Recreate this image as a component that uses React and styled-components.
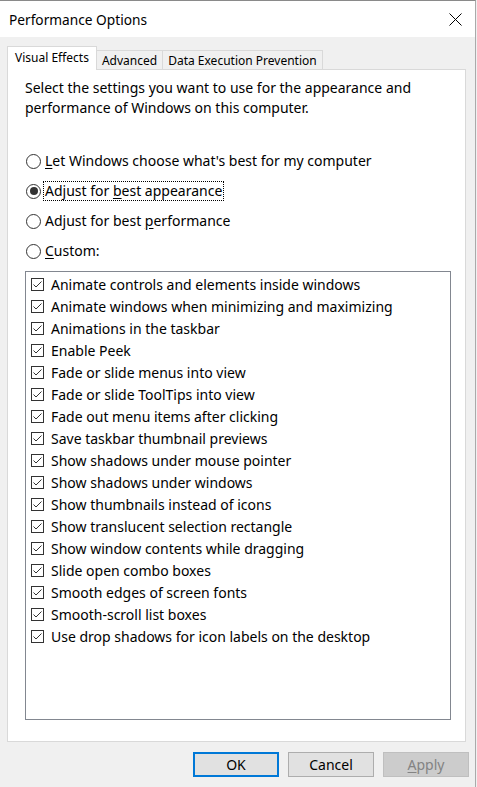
import React from "react";
import styled, { createGlobalStyle } from "styled-components";

const GlobalStyle = createGlobalStyle`
  html, body {
    margin: 0;
    padding: 0;
    background: #f0f0f0;
  }
  body {
    font-family: "Noto Sans", "Open Sans", sans-serif;
    font-size: 14px;
    color: #000;
  }
`;

const effects = [
  "Animate controls and elements inside windows",
  "Animate windows when minimizing and maximizing",
  "Animations in the taskbar",
  "Enable Peek",
  "Fade or slide menus into view",
  "Fade or slide ToolTips into view",
  "Fade out menu items after clicking",
  "Save taskbar thumbnail previews",
  "Show shadows under mouse pointer",
  "Show shadows under windows",
  "Show thumbnails instead of icons",
  "Show translucent selection rectangle",
  "Show window contents while dragging",
  "Slide open combo boxes",
  "Smooth edges of screen fonts",
  "Smooth-scroll list boxes",
  "Use drop shadows for icon labels on the desktop",
];

export default function App() {
  return (
    <>
      <GlobalStyle />
      <Window>
        <TitleBar>
          <Title>Performance Options</Title>
          <CloseButton>
            <svg width="13" height="13" viewBox="0 0 13 13">
              <path d="M0.5 0.5 L12.5 12.5 M12.5 0.5 L0.5 12.5" stroke="#000" strokeWidth="1" />
            </svg>
          </CloseButton>
        </TitleBar>
        <Body>
          <TabStrip>
            <Tab $active>Visual Effects</Tab>
            <Tab>Advanced</Tab>
            <Tab>Data Execution Prevention</Tab>
          </TabStrip>
          <Panel>
            <Description>
              Select the settings you want to use for the appearance and
              performance of Windows on this computer.
            </Description>
            <RadioGroup>
              <RadioRow>
                <Radio />
                <RadioLabel>
                  <u>L</u>et Windows choose what's best for my computer
                </RadioLabel>
              </RadioRow>
              <RadioRow>
                <Radio $checked />
                <RadioLabel $focused>
                  Adjust for <u>b</u>est appearance
                </RadioLabel>
              </RadioRow>
              <RadioRow>
                <Radio />
                <RadioLabel>
                  Adjust for best <u>p</u>erformance
                </RadioLabel>
              </RadioRow>
              <RadioRow>
                <Radio />
                <RadioLabel>
                  <u>C</u>ustom:
                </RadioLabel>
              </RadioRow>
            </RadioGroup>
            <ListBox>
              {effects.map((label) => (
                <CheckRow key={label}>
                  <CheckBox />
                  <span>{label}</span>
                </CheckRow>
              ))}
            </ListBox>
          </Panel>
          <Footer>
            <Button $default>OK</Button>
            <Button>Cancel</Button>
            <Button $disabled>
              <u>A</u>pply
            </Button>
          </Footer>
        </Body>
      </Window>
    </>
  );
}

function CheckBox() {
  return (
    <CheckIcon width="13" height="13" viewBox="0 0 13 13">
      <rect x="0.5" y="0.5" width="12" height="12" fill="#fff" stroke="#333" />
      <path d="M2.5 6.5 L5 9 L10.5 3.5" fill="none" stroke="#333" strokeWidth="1" />
    </CheckIcon>
  );
}

const Window = styled.div`
  width: 475px;
  height: 786px;
  border-top: 1px solid #8a8a8a;
  border-right: 1px solid #aaaaaa;
  background: #f0f0f0;
  display: flex;
  flex-direction: column;
`;

const TitleBar = styled.div`
  height: 36px;
  background: #fff;
  display: flex;
  align-items: center;
  justify-content: space-between;
  padding-left: 9px;
`;

const Title = styled.div`
  font-size: 13.7px;
  color: #000;
`;

const CloseButton = styled.div`
  width: 40px;
  height: 36px;
  display: flex;
  align-items: center;
  justify-content: center;
`;

const Body = styled.div`
  flex: 1;
  display: flex;
  flex-direction: column;
  padding: 9px 6px 0 7px;
`;

const TabStrip = styled.div`
  display: flex;
  align-items: flex-end;
  height: 24px;
  position: relative;
  z-index: 1;
  margin-bottom: -1px;
`;

const Tab = styled.div`
  height: ${(p) => (p.$active ? "24px" : "20px")};
  padding: 0 ${(p) => (p.$active ? "7px" : "5px")};
  background: ${(p) => (p.$active ? "#fff" : "#f0f0f0")};
  border: 1px solid #d9d9d9;
  border-bottom: ${(p) => (p.$active ? "none" : "1px solid #d9d9d9")};
  border-left: ${(p) => (p.$active ? "1px solid #d9d9d9" : "none")};
  box-sizing: border-box;
  display: flex;
  align-items: center;
  padding-bottom: ${(p) => (p.$active ? "3px" : "0")};
  font-size: 12px;
  white-space: nowrap;
`;

const Panel = styled.div`
  height: 673px;
  margin-right: 3px;
  box-sizing: border-box;
  background: #fff;
  border: 1px solid #d9d9d9;
  padding: 8px 14px 0 17px;
  display: flex;
  flex-direction: column;
`;

const Description = styled.p`
  margin: 0;
  line-height: 20px;
  font-size: 14px;
`;

const RadioGroup = styled.div`
  margin-top: 28px;
  display: flex;
  flex-direction: column;
`;

const RadioRow = styled.div`
  height: 30px;
  display: flex;
  align-items: center;
`;

const Radio = styled.span`
  width: 15px;
  height: 15px;
  box-sizing: border-box;
  margin-left: 1px;
  margin-right: 3px;
  border: 1px solid #333;
  border-radius: 50%;
  background: #fff;
  display: flex;
  align-items: center;
  justify-content: center;
  flex-shrink: 0;

  &::after {
    content: "";
    display: ${(p) => (p.$checked ? "block" : "none")};
    width: 8px;
    height: 8px;
    border-radius: 50%;
    background: #333;
  }
`;

const RadioLabel = styled.span`
  padding: 0 1px;
  line-height: 18px;
  outline: ${(p) => (p.$focused ? "1px dotted #000" : "none")};
  white-space: nowrap;

  u {
    text-underline-offset: 2px;
  }
`;

const ListBox = styled.div`
  margin-top: 5px;
  height: 449px;
  box-sizing: border-box;
  border: 1px solid #828790;
  padding: 1px 0 0 5px;
  display: flex;
  flex-direction: column;
`;

const CheckRow = styled.div`
  height: 22px;
  display: flex;
  align-items: center;
  gap: 7px;
  white-space: nowrap;
`;

const CheckIcon = styled.svg`
  flex-shrink: 0;
`;

const Footer = styled.div`
  display: flex;
  justify-content: flex-end;
  gap: 9px;
  margin-top: 10px;
`;

const Button = styled.div`
  width: 86px;
  height: 25px;
  box-sizing: border-box;
  display: flex;
  align-items: center;
  justify-content: center;
  font-size: 14px;
  background: ${(p) => (p.$disabled ? "#cccccc" : "#e1e1e1")};
  color: ${(p) => (p.$disabled ? "#838383" : "#000")};
  border: ${(p) =>
    p.$default ? "2px solid #0078d7" : p.$disabled ? "1px solid #bfbfbf" : "1px solid #adadad"};

  u {
    text-underline-offset: 2px;
  }
`;
